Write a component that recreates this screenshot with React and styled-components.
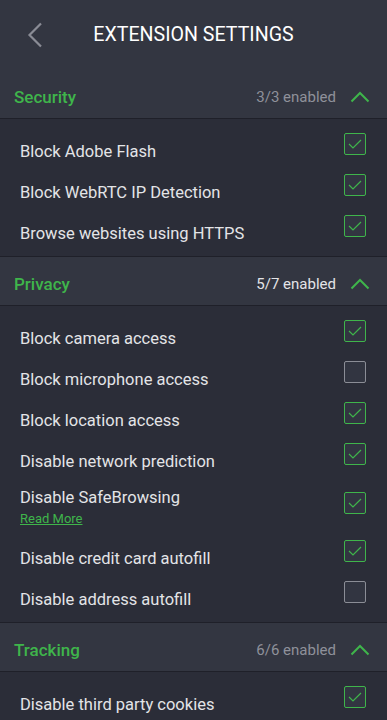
import React from 'react';
import styled, { createGlobalStyle } from 'styled-components';

const colors = {
  header: '#333641',
  list: '#2b2d38',
  line: '#1f2029',
  green: '#3fb54b',
  text: '#e3e4e7',
  muted: '#8f919a',
};

const GlobalStyle = createGlobalStyle`
  html, body {
    margin: 0;
    padding: 0;
    background: ${colors.list};
  }
  body {
    font-family: Roboto, "Liberation Sans", sans-serif;
    -webkit-font-smoothing: antialiased;
  }
`;

const Page = styled.div`
  width: 387px;
  height: 720px;
  overflow: hidden;
  background: ${colors.list};
`;

const TopBar = styled.header`
  height: 70px;
  display: flex;
  align-items: center;
  justify-content: center;
  position: relative;
  background: ${colors.header};
`;

const BackButton = styled.button`
  position: absolute;
  left: 22px;
  top: 19px;
  width: 26px;
  height: 32px;
  padding: 0;
  border: 0;
  background: none;
  display: flex;
  align-items: center;
  justify-content: center;
  cursor: pointer;
`;

const Title = styled.h1`
  margin: 0 0 1px 0;
  font-size: 19.6px;
  font-weight: 400;
  color: #ffffff;
`;

const SectionHeader = styled.div`
  height: 49px;
  box-sizing: border-box;
  display: flex;
  align-items: center;
  padding: 5px 17px 0 14px;
  background: ${colors.header};
  border-bottom: 1px solid ${colors.line};
`;

const SectionTitle = styled.span`
  flex: 1;
  font-size: 17px;
  font-weight: 500;
  color: ${colors.green};
`;

const Count = styled.span`
  font-size: 15px;
  color: ${(p) => (p.$all ? colors.muted : colors.text)};
  margin-right: 14px;
`;

const ItemList = styled.div`
  padding: 12px 0 2px;
  border-bottom: 1px solid ${colors.line};
  background: ${colors.list};
`;

const Row = styled.label`
  min-height: 41px;
  display: flex;
  align-items: center;
  padding: 0 21px 0 20px;
`;

const Label = styled.div`
  flex: 1;
  display: flex;
  flex-direction: column;
  padding: ${(p) => (p.$tall ? '6px 0 12px' : '0')};
`;

const LabelText = styled.span`
  font-size: 16.5px;
  line-height: 19px;
  color: ${colors.text};
`;

const ReadMore = styled.a`
  font-size: 13px;
  line-height: 15px;
  color: ${colors.green};
  text-decoration: underline;
  margin-top: 4px;
`;

const Box = styled.span`
  width: 22px;
  height: 22px;
  box-sizing: border-box;
  border: 1.5px solid ${(p) => (p.$on ? colors.green : '#8b8d96')};
  border-radius: 2px;
  background: #323541;
  display: flex;
  align-items: center;
  justify-content: center;
  margin-bottom: 15px;
`;

const Chevron = () => (
  <svg width="20" height="12" viewBox="0 0 20 12">
    <path d="M1.5 10.5 L10 2 L18.5 10.5" fill="none" stroke={colors.green} strokeWidth="2" />
  </svg>
);

const Check = () => (
  <svg width="14" height="10" viewBox="0 0 14 10">
    <path d="M1 5 L5 9 L13 1" fill="none" stroke={colors.green} strokeWidth="1.2" />
  </svg>
);

const sections = [
  {
    title: 'Security',
    items: [
      ['Block Adobe Flash', true],
      ['Block WebRTC IP Detection', true],
      ['Browse websites using HTTPS', true],
    ],
    total: 3,
  },
  {
    title: 'Privacy',
    items: [
      ['Block camera access', true],
      ['Block microphone access', false],
      ['Block location access', true],
      ['Disable network prediction', true],
      ['Disable SafeBrowsing', true, true],
      ['Disable credit card autofill', true],
      ['Disable address autofill', false],
    ],
    total: 7,
  },
  {
    title: 'Tracking',
    items: [['Disable third party cookies', true]],
    enabled: 6,
    total: 6,
  },
];

const Section = ({ title, items, total, enabled }) => {
  const on = enabled ?? items.filter((i) => i[1]).length;
  return (
    <section>
      <SectionHeader>
        <SectionTitle>{title}</SectionTitle>
        <Count $all={on === total}>{on}/{total} enabled</Count>
        <Chevron />
      </SectionHeader>
      <ItemList>
        {items.map(([text, checked, more]) => (
          <Row key={text}>
            <Label $tall={more}>
              <LabelText>{text}</LabelText>
              {more && <ReadMore href="#">Read More</ReadMore>}
            </Label>
            <Box $on={checked}>{checked && <Check />}</Box>
          </Row>
        ))}
      </ItemList>
    </section>
  );
};

export default function App() {
  return (
    <Page>
      <GlobalStyle />
      <TopBar>
        <BackButton aria-label="Back">
          <svg width="16" height="26" viewBox="0 0 16 26">
            <path d="M14 1.5 L2.5 13 L14 24.5" fill="none" stroke="#8a8c95" strokeWidth="2.2" />
          </svg>
        </BackButton>
        <Title>EXTENSION SETTINGS</Title>
      </TopBar>
      {sections.map((s) => (
        <Section key={s.title} {...s} />
      ))}
    </Page>
  );
}
